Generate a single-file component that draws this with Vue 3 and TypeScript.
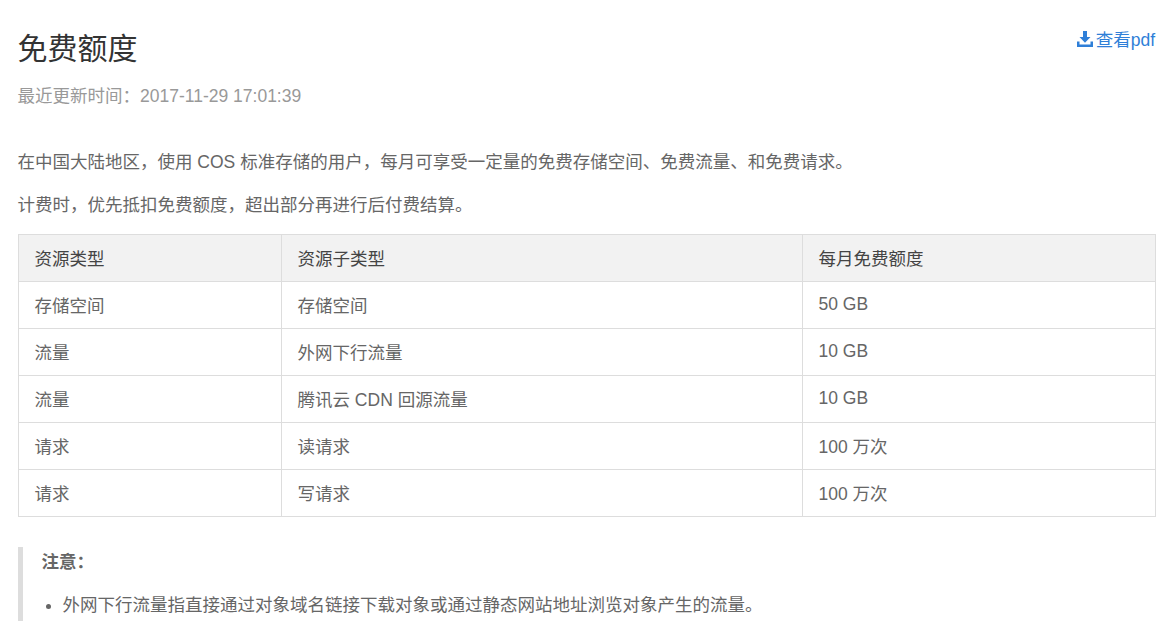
<script setup lang="ts">
const rows: string[][] = [
  ['存储空间', '存储空间', '50 GB'],
  ['流量', '外网下行流量', '10 GB'],
  ['流量', '腾讯云 CDN 回源流量', '10 GB'],
  ['请求', '读请求', '100 万次'],
  ['请求', '写请求', '100 万次'],
]
</script>

<template>
  <main class="page">
    <header class="head">
      <div class="head-text">
        <h1 class="title">免费额度</h1>
        <div class="meta">最近更新时间：2017-11-29 17:01:39</div>
      </div>
      <a class="pdf">
        <svg width="16" height="16" viewBox="0 0 16 16" aria-hidden="true">
          <path d="M6 0h4v6h3.500L8 11.800 2.500 6H6z" fill="#2f7fd8" />
          <path d="M0 10.500h2.500v3h11v-3H16V16H0z" fill="#2f7fd8" />
        </svg>
        <span>查看pdf</span>
      </a>
    </header>
    <p class="para first">在中国大陆地区，使用 COS 标准存储的用户，每月可享受一定量的免费存储空间、免费流量、和免费请求。</p>
    <p class="para second">计费时，优先抵扣免费额度，超出部分再进行后付费结算。</p>
    <table class="table">
      <colgroup>
        <col class="c1" />
        <col class="c2" />
        <col />
      </colgroup>
      <thead>
        <tr>
          <th>资源类型</th>
          <th>资源子类型</th>
          <th>每月免费额度</th>
        </tr>
      </thead>
      <tbody>
        <tr v-for="(r, i) in rows" :key="i">
          <td v-for="(c, j) in r" :key="j">{{ c }}</td>
        </tr>
      </tbody>
    </table>
    <blockquote class="note">
      <div class="note-title">注意：</div>
      <ul class="note-list">
        <li>外网下行流量指直接通过对象域名链接下载对象或通过静态网站地址浏览对象产生的流量。</li>
      </ul>
    </blockquote>
  </main>
</template>

<style scoped>
.page {
  padding: 30px 16px 0 18px;
  font-family: "Liberation Sans", "Noto Sans CJK SC", sans-serif;
  font-size: 17.5px;
  color: #666;
  background: #fff;
}
.head {
  display: flex;
  justify-content: space-between;
  align-items: flex-start;
}
.head-text {
  margin-left: -0.5px;
}
.title {
  margin: 0;
  font-size: 30px;
  font-weight: 400;
  line-height: 38px;
  color: #333;
}
.meta {
  margin-top: 13px;
  line-height: 30px;
  color: #999;
}
.pdf {
  display: flex;
  align-items: center;
  gap: 3px;
  line-height: 20px;
  color: #2f7fd8;
}
.pdf svg {
  margin-top: -2px;
}
.para {
  margin: 0 0 0 -0.5px;
  line-height: 26px;
}
.first {
  margin-top: 38px;
}
.second {
  margin-top: 17px;
}
.table {
  width: 1138px;
  margin-top: 16px;
  border-collapse: collapse;
  table-layout: fixed;
}
.c1 {
  width: 263px;
}
.c2 {
  width: 521px;
}
th,
td {
  height: 47px;
  padding: 0 16px 2px 15.5px;
  border: 1px solid #ddd;
  text-align: left;
  font-weight: 400;
  box-sizing: border-box;
}
th {
  background: #f2f2f2;
  color: #444;
}
.note {
  margin: 30px 0 0;
  padding: 2px 0 0 18.5px;
  border-left: 5px solid #ddd;
  height: 72px;
}
.note-title {
  line-height: 26px;
  font-weight: 700;
}
.note-list {
  margin: 17px 0 0;
  padding: 0 0 0 21px;
  list-style: disc;
}
.note-list li {
  line-height: 26px;
}
</style>
